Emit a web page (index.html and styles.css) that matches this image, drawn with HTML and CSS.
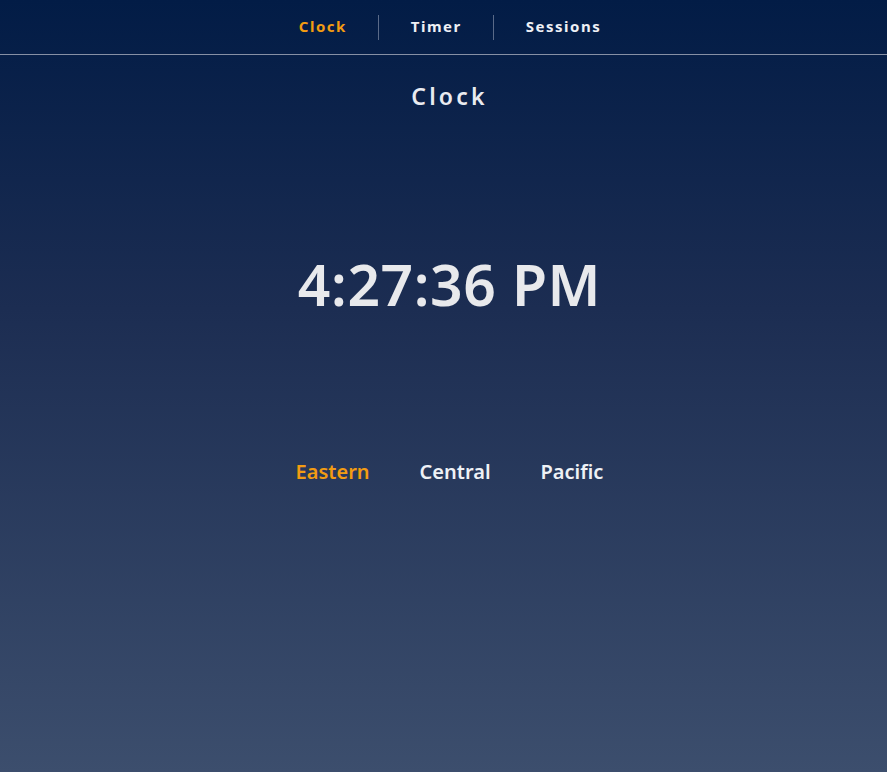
FILE: index.html
```html
<!DOCTYPE html>
<html lang="en">
<head>
<meta charset="utf-8">
<title>Clock</title>
<link rel="stylesheet" href="styles.css">
</head>
<body>
<div class="page">
  <nav class="nav">
    <a class="nav-item active">Clock</a>
    <span class="divider"></span>
    <a class="nav-item">Timer</a>
    <span class="divider"></span>
    <a class="nav-item">Sessions</a>
  </nav>
  <main class="main">
    <h1 class="title">Clock</h1>
    <div class="time">4:27:36 PM</div>
    <div class="zones">
      <span class="zone active">Eastern</span>
      <span class="zone">Central</span>
      <span class="zone">Pacific</span>
    </div>
  </main>
</div>
</body>
</html>
```
FILE: styles.css
```css
html, body {
  margin: 0;
  padding: 0;
  height: 100%;
}
body {
  background: linear-gradient(180deg, #021c46 0%, #1c2d52 40%, #3c4e6d 100%);
  font-family: "Noto Sans", "DejaVu Sans", sans-serif;
  color: #e9ebf0;
}
.page {
  min-height: 772px;
  display: flex;
  flex-direction: column;
}
.nav {
  height: 54px;
  border-bottom: 1px solid #8790a5;
  display: flex;
  align-items: center;
  justify-content: center;
  padding-left: 12px;
}
.nav-item {
  font-size: 15px;
  font-weight: 700;
  letter-spacing: 1.5px;
  color: #eef0f5;
  padding: 0 31px 2px 32px;
}
.nav-item.active {
  color: #f39c12;
}
.divider {
  width: 1px;
  height: 25px;
  background: #5a6a88;
}
.main {
  display: flex;
  flex-direction: column;
  align-items: center;
  padding-left: 12px;
}
.title {
  margin: 25px 0 0;
  font-size: 23px;
  font-weight: 600;
  letter-spacing: 3.2px;
  color: #e9ebf0;
  line-height: 32px;
}
.time {
  margin-top: 132px;
  font-size: 57px;
  font-weight: 600;
  line-height: 80px;
  letter-spacing: 0.6px;
  color: #e8e9ec;
}
.zones {
  margin-top: 134px;
  display: flex;
  gap: 50px;
}
.zone {
  font-size: 20px;
  font-weight: 600;
  color: #eef1f6;
}
.zone.active {
  color: #f39c12;
}
```
